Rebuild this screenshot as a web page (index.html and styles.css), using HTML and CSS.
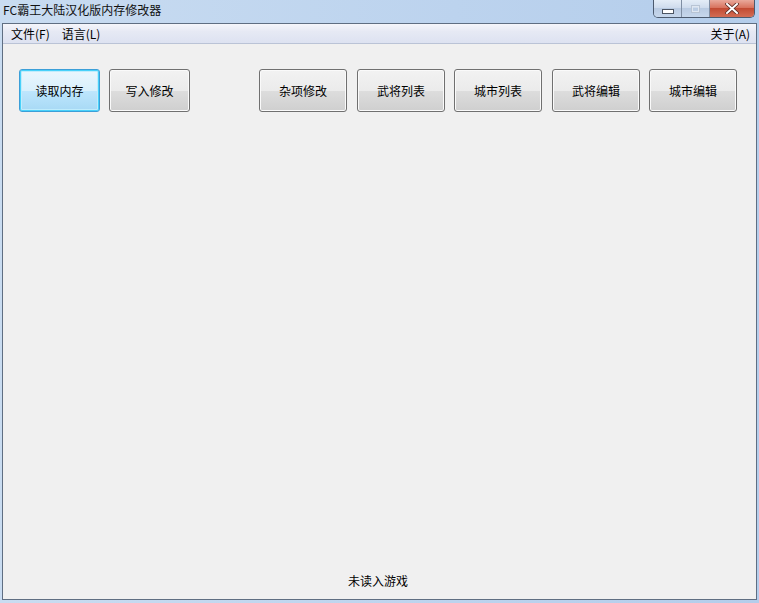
FILE: index.html
```html
<!DOCTYPE html>
<html lang="zh-CN">
<head>
    <meta charset="UTF-8">
    <title>FC霸王大陆汉化版内存修改器</title>
    <link rel="stylesheet" href="styles.css">
</head>
<body>
    <div class="window">
        <div class="titlebar">
            <span class="title">FC霸王大陆汉化版内存修改器</span>
            <div class="caption">
                <span class="cap min"><i></i></span>
                <span class="cap max"><i></i></span>
                <span class="cap close">
                    <svg width="14" height="11" viewBox="0 0 14 11">
                        <path d="M2 1 L12 10 M12 1 L2 10" stroke="#5a2a22" stroke-width="3.6" stroke-linecap="square"/>
                        <path d="M2 1 L12 10 M12 1 L2 10" stroke="#fff" stroke-width="2" stroke-linecap="square"/>
                    </svg>
                </span>
            </div>
        </div>

        <div class="client">
            <div class="menubar">
                <span class="menu">文件(F)</span>
                <span class="menu">语言(L)</span>
                <span class="menu right">关于(A)</span>
            </div>

            <div class="content">
                <div class="toolbar">
                    <div class="group">
                        <button class="btn focus">读取内存</button>
                        <button class="btn">写入修改</button>
                    </div>
                    <div class="group tabs">
                        <button class="btn wide">杂项修改</button>
                        <button class="btn wide">武将列表</button>
                        <button class="btn wide">城市列表</button>
                        <button class="btn wide">武将编辑</button>
                        <button class="btn wide">城市编辑</button>
                    </div>
                </div>
                <div class="status">未读入游戏</div>
            </div>
        </div>
    </div>
</body>
</html>
```

FILE: styles.css
```css
body {
    margin: 0;
    padding: 0;
    font-family: "Noto Sans CJK SC", "Noto Sans", sans-serif;
    font-size: 12px;
    color: #000;
}

.window {
    width: 759px;
    height: 603px;
    box-sizing: border-box;
    display: flex;
    flex-direction: column;
    padding: 0 2px 3px 2px;
    background: linear-gradient(to right, #c9dcf1, #bcd3ee 60%, #b4cdeb);
}

.titlebar {
    height: 23px;
    display: flex;
    justify-content: space-between;
    align-items: flex-start;
    flex-shrink: 0;
}

.title {
    margin: 2px 0 0 1px;
    font-size: 12px;
    line-height: 16px;
    color: #111;
}

.caption {
    display: flex;
    margin-right: 2px;
    border: 1px solid #4c5a6e;
    border-top: none;
    border-radius: 0 0 5px 5px;
    overflow: hidden;
    height: 17px;
}

.cap {
    display: flex;
    align-items: center;
    justify-content: center;
    height: 17px;
    background: linear-gradient(#e4edf7, #cfdced 45%, #b9cbe2 50%, #c7d7ec);
}

.min {
    width: 27px;
    border-right: 1px solid #7f8ea3;
}

.min i {
    display: block;
    width: 10px;
    height: 3px;
    margin-top: 5px;
    background: #fff;
    border: 1px solid #4c5563;
}

.max {
    width: 27px;
    border-right: 1px solid #7f8ea3;
}

.max i {
    display: block;
    width: 7px;
    height: 6px;
    border: 1px solid #b8c4d4;
    box-shadow: inset 0 0 0 1px #dfe7f1;
}

.close {
    width: 44px;
    background: linear-gradient(#e9a99b, #d8735e 45%, #c24b33 50%, #d36c54);
}

.client {
    flex: 1;
    display: flex;
    flex-direction: column;
    border: 1px solid #5f6e82;
    background: #f0f0f0;
}

.menubar {
    display: flex;
    height: 19px;
    align-items: center;
    padding: 0 2px;
    background: linear-gradient(#f5f6fb, #e6e9f4 40%, #dde2f1);
    border-bottom: 1px solid #bac3d6;
    flex-shrink: 0;
}

.menu {
    padding: 0 6px;
    line-height: 18px;
}

.menu.right {
    margin-left: auto;
    padding-right: 4px;
}

.content {
    flex: 1;
    display: flex;
    flex-direction: column;
    justify-content: space-between;
    padding: 25px 19px 10px 16px;
}

.toolbar {
    display: flex;
    justify-content: space-between;
}

.group {
    display: flex;
    gap: 9px;
}

.tabs .btn:nth-child(2),
.tabs .btn:nth-child(4) {
    margin-left: 1px;
}

.btn {
    width: 81px;
    height: 43px;
    padding: 0;
    font-family: inherit;
    font-size: 12px;
    color: #000;
    border: 1px solid #707070;
    border-radius: 3px;
    background: linear-gradient(#f2f2f2, #ebebeb 50%, #dddddd 51%, #cfcfcf);
    box-shadow: inset 0 0 0 1px #fafafa;
}

.btn.wide {
    width: 88px;
}

.btn.focus {
    border-color: #3c9fd8;
    background: linear-gradient(#eaf6fd, #d9f0fc 50%, #bee6fd 51%, #a7d9f5);
    box-shadow: inset 0 0 0 1px #48d1fa, inset 0 0 0 2px #c0ecfc;
}

.status {
    text-align: center;
    line-height: 16px;
}
```
